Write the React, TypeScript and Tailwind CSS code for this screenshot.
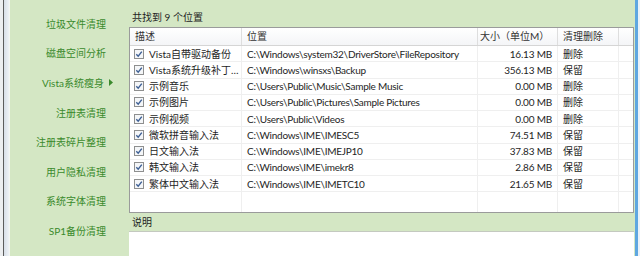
const menu = [
  '垃圾文件清理',
  '磁盘空间分析',
  'Vista系统瘦身',
  '注册表清理',
  '注册表碎片整理',
  '用户隐私清理',
  '系统字体清理',
  'SP1备份清理',
];

const rows = [
  { name: 'Vista自带驱动备份', path: 'C:\\Windows\\system32\\DriverStore\\FileRepository', size: '16.13 MB', action: '删除' },
  { name: 'Vista系统升级补丁…', path: 'C:\\Windows\\winsxs\\Backup', size: '356.13 MB', action: '保留' },
  { name: '示例音乐', path: 'C:\\Users\\Public\\Music\\Sample Music', size: '0.00 MB', action: '删除' },
  { name: '示例图片', path: 'C:\\Users\\Public\\Pictures\\Sample Pictures', size: '0.00 MB', action: '删除' },
  { name: '示例视频', path: 'C:\\Users\\Public\\Videos', size: '0.00 MB', action: '删除' },
  { name: '微软拼音输入法', path: 'C:\\Windows\\IME\\IMESC5', size: '74.51 MB', action: '保留' },
  { name: '日文输入法', path: 'C:\\Windows\\IME\\IMEJP10', size: '37.83 MB', action: '保留' },
  { name: '韩文输入法', path: 'C:\\Windows\\IME\\imekr8', size: '2.86 MB', action: '保留' },
  { name: '繁体中文输入法', path: 'C:\\Windows\\IME\\IMETC10', size: '21.65 MB', action: '保留' },
];

function CheckBox() {
  return (
    <svg width="10" height="10" viewBox="0 0 10 10" className="shrink-0">
      <rect x="0.5" y="0.5" width="9" height="9" fill="#f4f6f8" stroke="#8e8f8f" />
      <path d="M2.3 5.2 L4.2 7.2 L7.8 2.6" fill="none" stroke="#3d5f94" strokeWidth="1.4" />
    </svg>
  );
}

const cols = 'grid grid-cols-[112px_236px_80px_61px_1fr]';

export default function App() {
  return (
    <div
      className="w-[640px] h-[256px] flex overflow-hidden bg-[#d4e7c4] text-[10px]"
      style={{ fontFamily: 'Lato, "Noto Sans CJK SC", sans-serif' }}
    >
      {/* 背后窗口的边缘 */}
      <div className="w-[10px] flex shrink-0">
        <div className="w-[3px] bg-[#eceef0]" />
        <div className="w-[1px] bg-[#5c5c5c]" />
        <div className="w-[5px] bg-gradient-to-r from-[#d8dfe8] to-[#eef2f6]" />
        <div className="w-[1px] bg-[#f4f6f2]" />
      </div>

      {/* 左侧菜单 */}
      <div className="w-[118px] shrink-0 pt-[9px] flex flex-col">
        {menu.map((m) => {
          const isVista = m.startsWith('Vista');
          return (
            <div
              key={m}
              className={`h-[29.6px] flex items-center justify-end text-[#3a8a2c] leading-none ${isVista ? 'pr-[15px]' : 'pr-[22px]'}`}
            >
              <span>{m}</span>
              {isVista && (
                <svg width="4" height="7" viewBox="0 0 4 7" className="ml-[5px]">
                  <path d="M0 0 L4 3.5 L0 7 Z" fill="#3a8a2c" />
                </svg>
              )}
            </div>
          );
        })}
      </div>

      {/* 主区域 */}
      <div className="flex-1 flex flex-col pl-[1px] pr-[1px]">
        <div className="h-[27px] pt-[11px] pl-[3px] leading-[12px] text-[#1e1e1e]">共找到 9 个位置</div>

        <div className="h-[186px] border border-[#9a9b9b] bg-white flex flex-col">
          <div className={`${cols} h-[18px] border-b border-[#d5d5d5] bg-gradient-to-b from-white to-[#f4f5f7] text-[#333]`}>
            <div className="border-r border-[#dedede] pl-[5px] flex items-center">描述</div>
            <div className="border-r border-[#dedede] pl-[5px] flex items-center">位置</div>
            <div className="border-r border-[#dedede] pl-[2px] flex items-center">大小（单位M）</div>
            <div className="border-r border-[#dedede] pl-[5px] flex items-center">清理删除</div>
            <div />
          </div>

          {rows.map((r) => (
            <div key={r.name} className={`${cols} h-[16.25px] text-[#1e1e1e] leading-none`}>
              <div className="border-r border-b border-[#efefef] pl-[4px] flex items-center gap-[5px]">
                <CheckBox />
                <span className="whitespace-nowrap">{r.name}</span>
              </div>
              <div className="border-r border-b border-[#efefef] pl-[5px] flex items-center whitespace-nowrap tracking-[-0.25px]">{r.path}</div>
              <div className="border-r border-b border-[#efefef] pr-[5px] flex items-center justify-end whitespace-nowrap tracking-[-0.2px]">{r.size}</div>
              <div className="border-r border-b border-[#efefef] pl-[5px] flex items-center">{r.action}</div>
              <div className="border-b border-[#efefef]" />
            </div>
          ))}

          <div className={`${cols} flex-1`}>
            <div className="border-r border-[#efefef]" />
            <div className="border-r border-[#efefef]" />
            <div className="border-r border-[#efefef]" />
            <div className="border-r border-[#efefef]" />
            <div />
          </div>
        </div>

        <div className="h-[18px] pl-[3px] flex items-center text-[#1e1e1e]">说明</div>
        <div className="flex-1 bg-white border-t border-[#c4c9c0]" />
      </div>

      {/* 右侧窗口边框 */}
      <div className="w-[5px] flex shrink-0">
        <div className="w-[3px] bg-[#5fa7e0]" />
        <div className="w-[2px] bg-[#eaf2f9]" />
      </div>
    </div>
  );
}
